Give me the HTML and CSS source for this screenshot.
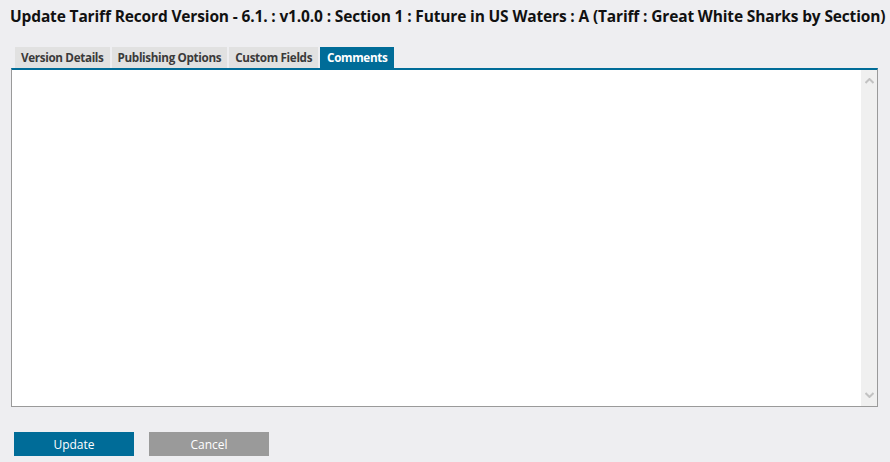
FILE: index.html
```html
<!DOCTYPE html>
<html lang="en">
<head>
    <meta charset="UTF-8">
    <title>Update Tariff Record Version</title>
    <link rel="stylesheet" href="styles.css">
</head>
<body>
    <h1 class="titulo">Update Tariff Record Version - 6.1. : v1.0.0 : Section 1 : Future in US Waters : A (Tariff : Great White Sharks by Section)</h1>

    <div class="tabs">
        <div class="tab">Version Details</div>
        <div class="tab">Publishing Options</div>
        <div class="tab">Custom Fields</div>
        <div class="tab activo">Comments</div>
    </div>

    <div class="panel">
        <div class="comentarios"></div>
        <div class="scroll">
            <svg width="9" height="6" viewBox="0 0 9 6"><path d="M0.5 5 L4.5 1 L8.5 5" fill="none" stroke="#c2c2c2" stroke-width="2"/></svg>
            <svg width="9" height="6" viewBox="0 0 9 6"><path d="M0.5 1 L4.5 5 L8.5 1" fill="none" stroke="#c2c2c2" stroke-width="2"/></svg>
        </div>
    </div>

    <div class="botones">
        <button class="btn btn-update">Update</button>
        <button class="btn btn-cancel">Cancel</button>
    </div>
</body>
</html>
```

FILE: styles.css
```css
/* Estilo general */
body {
    margin: 0;
    background-color: #eeeef1;
    font-family: "Open Sans", "Noto Sans", sans-serif;
    color: #111;
}

/* Titulo */
.titulo {
    margin: 0;
    padding: 6px 0 0 10px;
    font-size: 15.5px;
    font-weight: bold;
    line-height: 20px;
    white-space: nowrap;
    letter-spacing: -0.15px;
}

/* Pestañas */
.tabs {
    display: flex;
    gap: 2px;
    margin: 21px 0 0 15px;
}

.tab {
    height: 21px;
    line-height: 21px;
    padding: 0 6px;
    font-size: 11.7px;
    font-weight: bold;
    background-color: #e1e1e1;
    color: #3a3a3a;
    letter-spacing: -0.35px;
}

.tab.activo {
    background-color: #006c98;
    color: #fff;
    padding: 0 7px;
}

/* Panel de comentarios */
.panel {
    display: flex;
    margin-left: 11px;
    width: 865px;
    height: 336px;
    border-top: 2px solid #006c98;
    border-left: 1px solid #9a9a9a;
    border-right: 1px solid #9a9a9a;
    border-bottom: 1px solid #9a9a9a;
    background-color: #fff;
}

.comentarios {
    flex: 1;
}

.scroll {
    width: 16px;
    background-color: #f0f0f0;
    display: flex;
    flex-direction: column;
    justify-content: space-between;
    align-items: center;
    padding: 8px 0;
}

/* Botones */
.botones {
    display: flex;
    gap: 15px;
    margin: 25px 0 0 14px;
}

.btn {
    width: 120px;
    height: 24px;
    border: none;
    font-family: "Open Sans", "Noto Sans", sans-serif;
    font-size: 12px;
    color: #fff;
    padding: 0;
}

.btn-update {
    background-color: #006c98;
}

.btn-cancel {
    background-color: #9a9a9a;
}
```
